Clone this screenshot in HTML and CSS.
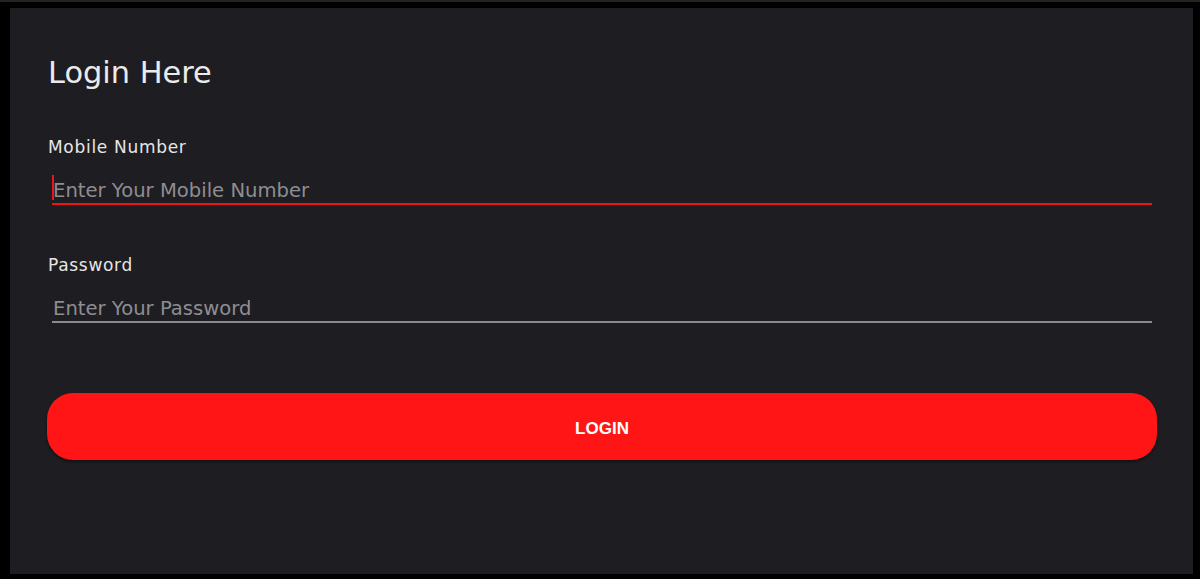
FILE: index.html
```html
<!DOCTYPE html>
<html>
<head>
<meta charset="utf-8">
<link rel="stylesheet" href="styles.css">
</head>
<body>
<div class="panel">
  <h1 class="title">Login Here</h1>
  <div class="field field-mobile">
    <label class="label">Mobile Number</label>
    <div class="input-wrap focused">
      <span class="caret"></span>
      <input class="input" type="text" placeholder="Enter Your Mobile Number">
    </div>
  </div>
  <div class="field field-password">
    <label class="label">Password</label>
    <div class="input-wrap">
      <input class="input" type="password" placeholder="Enter Your Password">
    </div>
  </div>
  <button class="btn">LOGIN</button>
</div>
</body>
</html>
```
FILE: styles.css
```css
html, body {
  margin: 0;
  padding: 0;
}
body {
  background: #000;
  border-top: 2px solid #232323;
  height: 577px;
  overflow: hidden;
}
.panel {
  margin: 6px 7px 0 10px;
  height: 566px;
  background: #1e1d22;
  padding: 0 36px 0 37px;
  box-sizing: border-box;
  display: flex;
  flex-direction: column;
}
.title {
  margin: 47px 0 0 1px;
  font-family: "DejaVu Sans", sans-serif;
  font-weight: 400;
  font-size: 30.4px;
  line-height: 36px;
  color: #ebebeb;
}
.field {
  display: flex;
  flex-direction: column;
}
.field-mobile {
  margin-top: 46px;
}
.field-password {
  margin-top: 50px;
}
.label {
  margin-left: 1px;
  font-family: "DejaVu Sans", sans-serif;
  font-size: 17px;
  line-height: 20px;
  letter-spacing: 0.7px;
  color: #e6e6e6;
}
.input-wrap {
  position: relative;
  margin: 17px 5px 0 5px;
  padding-top: 5px;
  border-bottom: 2px solid #8a898d;
}
.input-wrap.focused {
  border-bottom-color: #f01416;
}
.caret {
  position: absolute;
  left: 0;
  top: 1px;
  width: 2px;
  height: 25px;
  background: #f01416;
}
.input {
  display: block;
  width: 100%;
  box-sizing: border-box;
  background: transparent;
  border: 0;
  outline: none;
  margin: 0;
  padding: 0 0 2px 1px;
  height: 24px;
  line-height: 22px;
  font-family: "DejaVu Sans", sans-serif;
  font-size: 19.6px;
  color: #ddd;
}
.input::placeholder {
  color: #8e8d92;
  opacity: 1;
}
.btn {
  margin-top: 70px;
  height: 67px;
  padding: 4px 0 0 0;
  border: 0;
  border-radius: 26px;
  background: #ff1515;
  color: #fff;
  font-family: "Liberation Sans", Arial, sans-serif;
  font-weight: 700;
  font-size: 17px;
  box-shadow: 0 2px 3px rgba(0,0,0,0.45);
}
```
